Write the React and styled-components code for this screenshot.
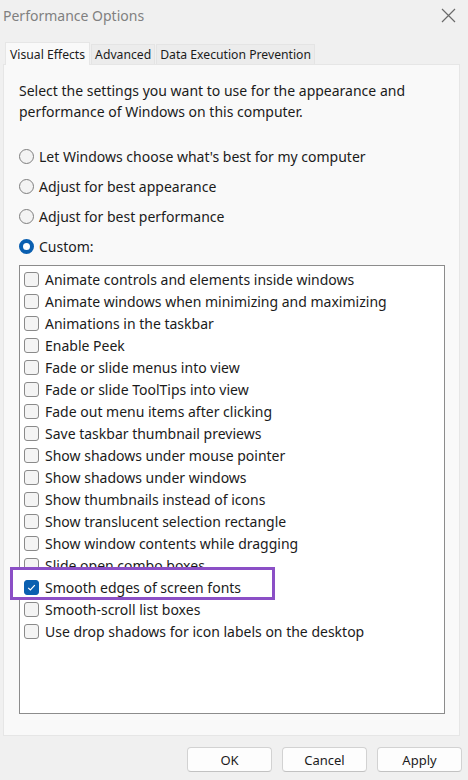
import React from "react";
import styled, { createGlobalStyle } from "styled-components";

const GlobalStyle = createGlobalStyle`
  html, body {
    margin: 0;
    padding: 0;
    background: #f0f0f0;
  }
  body {
    font-family: "Noto Sans", "Open Sans", "Liberation Sans", sans-serif;
    color: #1b1b1b;
  }
`;

const effects = [
  { label: "Animate controls and elements inside windows" },
  { label: "Animate windows when minimizing and maximizing" },
  { label: "Animations in the taskbar" },
  { label: "Enable Peek" },
  { label: "Fade or slide menus into view" },
  { label: "Fade or slide ToolTips into view" },
  { label: "Fade out menu items after clicking" },
  { label: "Save taskbar thumbnail previews" },
  { label: "Show shadows under mouse pointer" },
  { label: "Show shadows under windows" },
  { label: "Show thumbnails instead of icons" },
  { label: "Show translucent selection rectangle" },
  { label: "Show window contents while dragging" },
  { label: "Slide open combo boxes" },
  { label: "Smooth edges of screen fonts", checked: true, marked: true },
  { label: "Smooth-scroll list boxes" },
  { label: "Use drop shadows for icon labels on the desktop" },
];

const options = [
  "Let Windows choose what's best for my computer",
  "Adjust for best appearance",
  "Adjust for best performance",
  "Custom:",
];

const App = () => {
  return (
    <>
      <GlobalStyle />
      <Window>
        <TitleBar>
          <Title>Performance Options</Title>
          <CloseBtn>
            <svg width="15" height="15" viewBox="0 0 15 15">
              <path d="M1 1 L14 14 M14 1 L1 14" stroke="#6a6a6a" strokeWidth="1.2" fill="none" />
            </svg>
          </CloseBtn>
        </TitleBar>

        <Tabs>
          <Tab $active>Visual Effects</Tab>
          <Tab>Advanced</Tab>
          <Tab>Data Execution Prevention</Tab>
        </Tabs>

        <Panel>
          <Description>
            Select the settings you want to use for the appearance and
            performance of Windows on this computer.
          </Description>

          <RadioGroup>
            {options.map((o, i) => (
              <RadioRow key={o}>
                <Radio $on={i === 3} />
                <span>{o}</span>
              </RadioRow>
            ))}
          </RadioGroup>

          <ListBox>
            {effects.map((e) => (
              <CheckRow key={e.label}>
                {e.marked && <Highlight />}
                <CheckBox $on={e.checked}>
                  {e.checked && (
                    <svg width="11" height="11" viewBox="0 0 11 11">
                      <path d="M2.2 5.8 L4.4 8 L8.8 3.2" stroke="#fff" strokeWidth="1.2" fill="none" />
                    </svg>
                  )}
                </CheckBox>
                <CheckLabel>{e.label}</CheckLabel>
              </CheckRow>
            ))}
          </ListBox>
        </Panel>

        <Footer>
          <Button>OK</Button>
          <Button>Cancel</Button>
          <Button>Apply</Button>
        </Footer>
      </Window>
    </>
  );
};

const Window = styled.div`
  width: 468px;
  height: 780px;
  display: flex;
  flex-direction: column;
  overflow: hidden;
`;

const TitleBar = styled.div`
  height: 31px;
  display: flex;
  align-items: center;
  justify-content: space-between;
  padding: 0 12px 0 3px;
`;

const Title = styled.div`
  font-size: 14px;
  color: #808080;
`;

const CloseBtn = styled.div`
  display: flex;
  align-items: center;
  justify-content: center;
  width: 15px;
  height: 15px;
`;

const Tabs = styled.div`
  display: flex;
  align-items: flex-end;
  height: 22px;
  margin-top: 11px;
  padding-left: 5px;
`;

const Tab = styled.div`
  height: ${(p) => (p.$active ? "22px" : "19px")};
  display: flex;
  align-items: center;
  padding: 0 ${(p) => (p.$active ? "4px" : "3px")};
  margin-left: ${(p) => (p.$active ? "0" : "1px")};
  font-size: 12.2px;
  background: ${(p) => (p.$active ? "#f9f9f9" : "#ececec")};
  border: 1px solid ${(p) => (p.$active ? "#e6e6e6" : "#e4e4e4")};
  border-bottom: none;
  position: relative;
  z-index: ${(p) => (p.$active ? 1 : 0)};
  margin-bottom: ${(p) => (p.$active ? "-1px" : "0")};
`;

const Panel = styled.div`
  margin: 0 8px 0 3px;
  height: 672px;
  box-sizing: border-box;
  background: #f9f9f9;
  border: 1px solid #e6e6e6;
  padding: 15px 14px 0 15px;
  display: flex;
  flex-direction: column;
`;

const Description = styled.p`
  margin: 0;
  font-size: 14px;
  line-height: 21px;
`;

const RadioGroup = styled.div`
  margin-top: 19px;
  display: flex;
  flex-direction: column;
`;

const RadioRow = styled.div`
  height: 30px;
  display: flex;
  align-items: center;
  gap: 5px;
  font-size: 14px;
`;

const Radio = styled.span`
  width: 15px;
  height: 15px;
  box-sizing: border-box;
  border-radius: 50%;
  flex-shrink: 0;
  border: ${(p) => (p.$on ? "4.5px solid #0a5fb0" : "1px solid #7f7f7f")};
  background: ${(p) => (p.$on ? "#ffffff" : "#f3f3f3")};
`;

const ListBox = styled.div`
  margin-top: 4px;
  height: 449px;
  box-sizing: border-box;
  background: #ffffff;
  border: 1px solid #8c8c8c;
  padding: 2px 4px;
  display: flex;
  flex-direction: column;
`;

const CheckRow = styled.div`
  position: relative;
  height: 22px;
  display: flex;
  align-items: center;
  gap: 6px;
  font-size: 14px;
`;

const Highlight = styled.div`
  position: absolute;
  left: -14px;
  top: -9px;
  width: 265px;
  height: 33px;
  box-sizing: border-box;
  border: 3px solid #8b4fc6;
  background: #ffffff;
`;

const CheckBox = styled.span`
  position: relative;
  width: 15px;
  height: 15px;
  box-sizing: border-box;
  flex-shrink: 0;
  border-radius: 3px;
  display: flex;
  align-items: center;
  justify-content: center;
  border: 1px solid ${(p) => (p.$on ? "#0a5fb0" : "#8a8a8a")};
  background: ${(p) => (p.$on ? "#0a5fb0" : "#f4f4f4")};
`;

const CheckLabel = styled.span`
  position: relative;
  white-space: nowrap;
`;

const Footer = styled.div`
  display: flex;
  justify-content: flex-end;
  gap: 10px;
  padding: 11px 6px 0 0;
`;

const Button = styled.button`
  width: 85px;
  height: 25px;
  box-sizing: border-box;
  background: #fdfdfd;
  border: 1px solid #d2d2d2;
  border-bottom-color: #c2c2c2;
  border-radius: 4px;
  font-family: inherit;
  font-size: 13px;
  color: #1b1b1b;
  padding: 0;
`;

export default App;
